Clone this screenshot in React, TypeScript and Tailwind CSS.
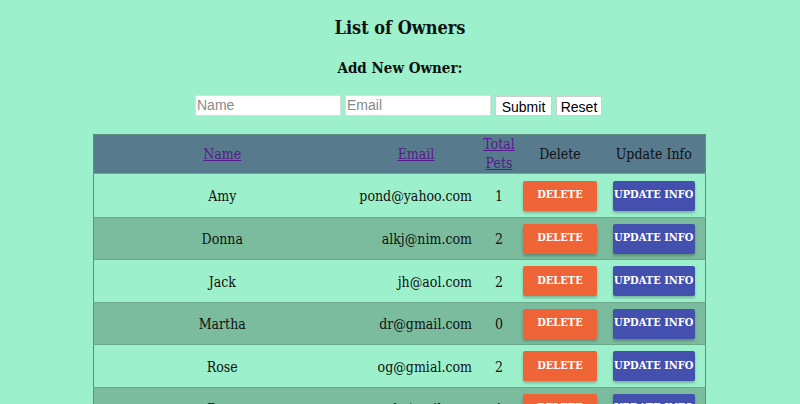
import React from "react";

interface Owner {
  name: string;
  email: string;
  pets: number;
}

const owners: Owner[] = [
  { name: "Amy", email: "pond@yahoo.com", pets: 1 },
  { name: "Donna", email: "alkj@nim.com", pets: 2 },
  { name: "Jack", email: "jh@aol.com", pets: 2 },
  { name: "Martha", email: "dr@gmail.com", pets: 0 },
  { name: "Rose", email: "og@gmial.com", pets: 2 },
  { name: "Rory", email: "rw@hotmail.com", pets: 1 },
];

const slab = { fontFamily: '"DejaVu Serif Condensed", "DejaVu Serif", serif' };

function OwnerRow({ owner, index }: { owner: Owner; index: number }) {
  const odd = index % 2 === 1;
  const height = index === 0 ? "h-[44px]" : odd ? "h-[42px]" : "h-[43px]";
  return (
    <tr className={`border-t border-[#6aa88b] ${height} ${odd ? "bg-[#7bbc9e]" : "bg-[#9cf0cb]"}`}>
      <td className="text-center pt-[2px]">{owner.name}</td>
      <td className="text-right pr-[9px] pt-[2px] whitespace-nowrap">{owner.email}</td>
      <td className="text-center pt-[2px]">{owner.pets}</td>
      <td className="text-center">
        <button className="h-[30px] w-[74px] bg-[#ee6436] text-white text-[11px] font-bold rounded-[2px] whitespace-nowrap shadow-[0_2px_3px_rgba(0,0,0,0.25)]">
          DELETE
        </button>
      </td>
      <td className="text-center">
        <button className="h-[30px] w-[82px] bg-[#4350ae] text-white text-[11px] font-bold rounded-[2px] whitespace-nowrap shadow-[0_2px_3px_rgba(0,0,0,0.25)]">
          UPDATE INFO
        </button>
      </td>
    </tr>
  );
}

export default function App() {
  return (
    <div className="h-[404px] bg-[#9cf0cb] text-[#111] text-[14px] overflow-hidden" style={slab}>
      <h1 className="text-[18px] font-bold text-center pt-[16px] leading-[24px]">List of Owners</h1>
      <h2 className="text-[15px] font-bold text-center mt-[19px] leading-[19px]">Add New Owner:</h2>

      <form
        className="flex justify-center items-center gap-[4px] mt-[17px] pr-[3px]"
        style={{ fontFamily: '"Liberation Sans", Arial, sans-serif' }}
      >
        <input
          placeholder="Name"
          className="w-[146px] h-[21px] bg-white border border-[#dcdcdc] px-[1px] text-[14px] placeholder:text-[#8a8a8a]"
        />
        <input
          placeholder="Email"
          className="w-[146px] h-[21px] bg-white border border-[#dcdcdc] px-[1px] text-[14px] placeholder:text-[#8a8a8a]"
        />
        <button type="button" className="h-[20px] w-[57px] bg-white border border-[#cfcfcf] text-[14px] text-black">
          Submit
        </button>
        <button type="button" className="h-[20px] w-[46px] bg-white border border-[#cfcfcf] text-[14px] text-black">
          Reset
        </button>
      </form>

      <table className="mx-auto mt-[18px] w-[612px] border border-[#5e8f7c] border-collapse table-fixed -translate-x-[1px]">
        <colgroup>
          <col className="w-[258px]" />
          <col className="w-[130px]" />
          <col className="w-[36px]" />
          <col className="w-[86px]" />
          <col className="w-[102px]" />
        </colgroup>
        <thead>
          <tr className="bg-[#577a8c] h-[39px] leading-[19px]">
            <th className="font-normal">
              <a href="#" className="underline text-[#551a8b]">Name</a>
            </th>
            <th className="font-normal">
              <a href="#" className="underline text-[#551a8b]">Email</a>
            </th>
            <th className="font-normal">
              <a href="#" className="underline text-[#551a8b]">Total Pets</a>
            </th>
            <th className="font-normal">Delete</th>
            <th className="font-normal">Update Info</th>
          </tr>
        </thead>
        <tbody>
          {owners.map((owner, i) => (
            <OwnerRow key={owner.name} owner={owner} index={i} />
          ))}
        </tbody>
      </table>
    </div>
  );
}
